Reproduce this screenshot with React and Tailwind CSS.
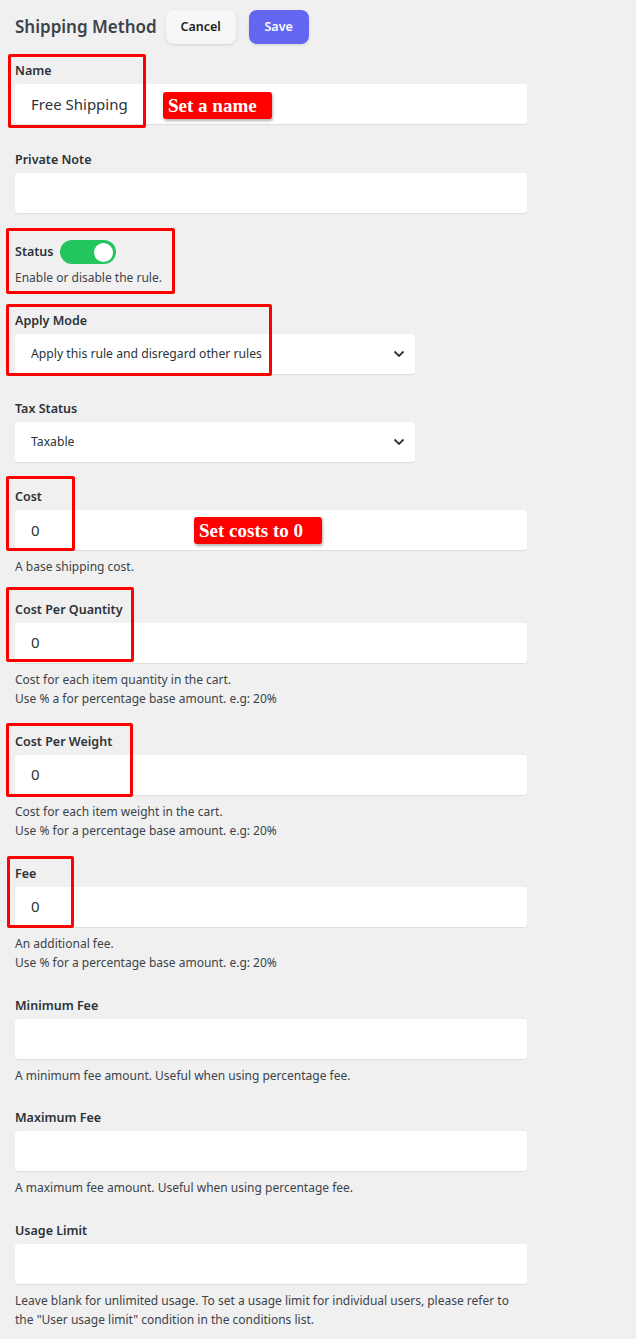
import React from "react";

const font = { fontFamily: '"Noto Sans", "Open Sans", sans-serif' };

const Label = ({ children }) => (
  <div className="text-[12.5px] font-semibold leading-[18px] text-[#2c3338] mb-1">{children}</div>
);

const Help = ({ lines }) => (
  <div className="mt-[7px] text-[12px] leading-[19.5px] text-[#3c434a]">
    {lines.map((l) => (
      <div key={l}>{l}</div>
    ))}
  </div>
);

const TextField = ({ label, value, help }) => (
  <div className={help ? "" : "pb-[3px]"}>
    <Label>{label}</Label>
    <div className="h-10 w-[512px] bg-white rounded-[3px] shadow-[0_1px_1px_rgba(0,0,0,0.08)] flex items-center px-4 text-[15px] text-[#2c3338]">
      {value}
    </div>
    {help && <Help lines={help} />}
  </div>
);

const SelectField = ({ label, value }) => (
  <div className="pb-[2px]">
    <Label>{label}</Label>
    <div className="h-10 w-[400px] bg-white rounded-[3px] shadow-[0_1px_1px_rgba(0,0,0,0.08)] flex items-center justify-between pl-4 pr-[10px] text-[12.2px] text-[#2c3338]">
      <span>{value}</span>
      <svg width="12" height="8" viewBox="0 0 12 8" fill="none">
        <path d="M1.5 1.5L6 6L10.5 1.5" stroke="#2c3338" strokeWidth="1.8" />
      </svg>
    </div>
  </div>
);

const Box = ({ className }) => (
  <div className={"absolute border-[3px] border-[#ff0000] rounded-[2px] pointer-events-none " + className} />
);

const Tag = ({ className, children }) => (
  <div
    className={"absolute bg-[#ff0000] text-white rounded-[3px] shadow-[1px_2px_3px_rgba(0,0,0,0.3)] flex items-center px-[5px] text-[19px] font-bold leading-none " + className}
    style={{ fontFamily: '"Liberation Serif", "DejaVu Serif", serif' }}
  >
    {children}
  </div>
);

export default function App() {
  return (
    <div className="relative min-h-[1339px] bg-[#f0f0f0] px-[15px] pt-[10px]" style={font}>
      <div className="flex items-center h-[34px]">
        <h1 className="text-[17px] font-semibold text-[#3c434a] mr-[9px]">Shipping Method</h1>
        <button className="h-[34px] w-[70px] rounded-lg bg-[#f7f7f7] shadow-[0_1px_3px_rgba(0,0,0,0.12)] text-[12.5px] font-semibold text-[#1e1e1e]">
          Cancel
        </button>
        <button className="ml-[13px] h-[34px] w-[60px] rounded-lg bg-[#6366f1] shadow-[0_1px_3px_rgba(0,0,0,0.12)] text-[12.5px] font-semibold text-white">
          Save
        </button>
      </div>

      <div className="mt-[18px] flex flex-col gap-6">
        <TextField label="Name" value="Free Shipping" />
        <TextField label="Private Note" value="" />
        <div>
          <div className="flex items-center h-6 mb-1">
            <span className="text-[12.5px] font-semibold text-[#2c3338] mr-[7px]">Status</span>
            <div className="w-[56px] h-6 rounded-full bg-[#22c55e] flex items-center justify-end pr-[3px]">
              <div className="w-[19px] h-[19px] rounded-full bg-white" />
            </div>
          </div>
          <div className="text-[12px] leading-5 text-[#3c434a]">Enable or disable the rule.</div>
        </div>
        <SelectField label="Apply Mode" value="Apply this rule and disregard other rules" />
        <SelectField label="Tax Status" value="Taxable" />
        <TextField label="Cost" value="0" help={["A base shipping cost."]} />
        <TextField
          label="Cost Per Quantity"
          value="0"
          help={["Cost for each item quantity in the cart.", "Use % a for percentage base amount. e.g: 20%"]}
        />
        <TextField
          label="Cost Per Weight"
          value="0"
          help={["Cost for each item weight in the cart.", "Use % for a percentage base amount. e.g: 20%"]}
        />
        <TextField
          label="Fee"
          value="0"
          help={["An additional fee.", "Use % for a percentage base amount. e.g: 20%"]}
        />
        <TextField
          label="Minimum Fee"
          value=""
          help={["A minimum fee amount. Useful when using percentage fee."]}
        />
        <TextField
          label="Maximum Fee"
          value=""
          help={["A maximum fee amount. Useful when using percentage fee."]}
        />
        <TextField
          label="Usage Limit"
          value=""
          help={[
            "Leave blank for unlimited usage. To set a usage limit for individual users, please refer to",
            'the "User usage limit" condition in the conditions list.',
          ]}
        />
      </div>

      <Box className="left-[8px] top-[54px] w-[138px] h-[74px]" />
      <Box className="left-[6px] top-[228px] w-[169px] h-[66px]" />
      <Box className="left-[6px] top-[304px] w-[266px] h-[72px]" />
      <Box className="left-[6px] top-[476px] w-[69px] h-[75px]" />
      <Box className="left-[6px] top-[587px] w-[128px] h-[75px]" />
      <Box className="left-[6px] top-[723px] w-[127px] h-[74px]" />
      <Box className="left-[7px] top-[856px] w-[67px] h-[72px]" />

      <Tag className="left-[163px] top-[92px] w-[109px] h-[27px]">Set a name</Tag>
      <Tag className="left-[194px] top-[517px] w-[128px] h-[27px]">Set costs to 0</Tag>
    </div>
  );
}
